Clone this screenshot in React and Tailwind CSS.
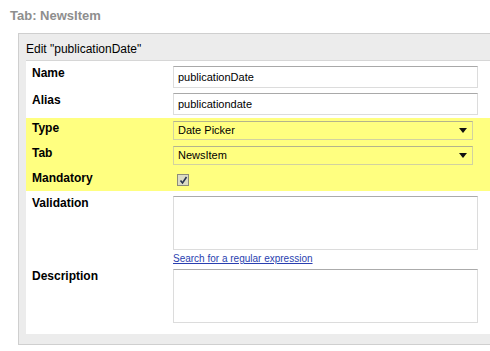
function Field({ label, children, labelClass = "" }) {
  return (
    <div className="flex items-start">
      <div className={"w-[147px] shrink-0 pl-[6px] text-[12px] font-bold leading-[14px] text-black " + labelClass}>
        {label}
      </div>
      {children}
    </div>
  )
}

function TextBox({ value }) {
  return (
    <div className="h-[22px] w-[305px] border border-[#dcdcdc] border-t-[#a9a9a9] bg-white pl-[4px] text-[11px] leading-[20px] text-black">
      {value}
    </div>
  )
}

function SelectBox({ value }) {
  return (
    <div className="flex h-[19px] w-[300px] items-center justify-between border border-[#d2d2a0] border-t-[#b4b48c] pl-[4px] pr-[5px] text-[11px] text-black">
      <span>{value}</span>
      <svg width="8" height="5" viewBox="0 0 8 5">
        <path d="M0 0H8L4 5Z" fill="#111" />
      </svg>
    </div>
  )
}

function TextArea({ h = "h-[54px]" }) {
  return <div className={"w-[305px] border border-[#dcdcdc] border-t-[#ababab] bg-white " + h} />
}

export default function App() {
  return (
    <div className="h-[351px] w-[490px] overflow-hidden bg-white" style={{ fontFamily: '"Liberation Sans", Arial, sans-serif' }}>
      <div className="pl-[10px] pt-[8px] text-[13px] font-bold leading-[16px] text-[#8e8e8e]">Tab: NewsItem</div>
      <div className="ml-[18px] mt-[9px] w-[490px] border-t border-l border-b border-[#cfcfcf] bg-[#ececec] pb-[10px] pl-[7px]">
        <div className="h-[26px] pt-[8px] text-[12px] leading-[14px] text-black">Edit "publicationDate"</div>
        <div className="border-t border-[#d6d6d6] bg-white pb-[11px] pt-[5px]">
          <Field label="Name">
            <TextBox value="publicationDate" />
          </Field>
          <div className="mt-[5px]">
            <Field label="Alias">
              <TextBox value="publicationdate" />
            </Field>
          </div>
          <div className="mt-[3px] bg-[#ffff80] pb-[4px] pt-[3px]">
            <Field label="Type">
              <SelectBox value="Date Picker" />
            </Field>
            <div className="mt-[6px]">
              <Field label="Tab">
                <SelectBox value="NewsItem" />
              </Field>
            </div>
            <div className="mt-[6px] h-[16px]">
              <Field label="Mandatory">
                <div className="ml-[4px] mt-[3px] flex h-[12px] w-[12px] items-center justify-center border border-[#8c8c7a] bg-[#dcdcc4]">
                  <svg width="9" height="9" viewBox="0 0 9 9">
                    <path d="M1.5 4.5L3.5 7L7.5 1" fill="none" stroke="#2a3550" strokeWidth="1.6" />
                  </svg>
                </div>
              </Field>
            </div>
          </div>
          <div className="mt-[5px]">
            <Field label="Validation">
              <div>
                <TextArea />
                <div className="mt-[2px] text-[10px] leading-[13px] text-[#2a3fb0] underline">Search for a regular expression</div>
              </div>
            </Field>
          </div>
          <div className="mt-[4px]">
            <Field label="Description">
              <TextArea />
            </Field>
          </div>
        </div>
      </div>
    </div>
  )
}
